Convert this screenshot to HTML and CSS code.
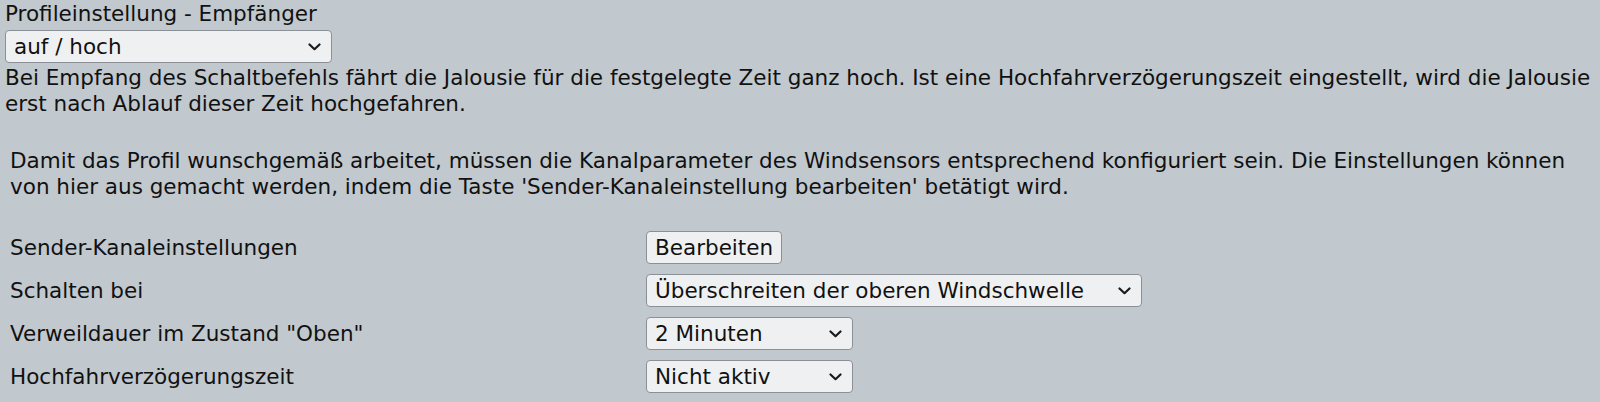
FILE: index.html
```html
<!DOCTYPE html>
<html lang="de">
<head>
    <meta charset="UTF-8">
    <title>Profileinstellung - Empfänger</title>
    <link rel="stylesheet" href="styles.css">
</head>
<body>
<div class="profile">
    <div class="profile-title">Profileinstellung - Empfänger</div>
    <span class="sel-wrap sel-wrap-block">
        <select id="profileSel" class="sel sel-profile">
            <option selected>auf / hoch</option>
            <option>ab / runter</option>
            <option>Stopp</option>
        </select>
        <svg class="chev" viewBox="0 0 13 8"><path d="M1.5 1.5 L6.5 6.2 L11.5 1.5"/></svg>
    </span>
    <p class="desc">Bei Empfang des Schaltbefehls fährt die Jalousie für die festgelegte Zeit ganz hoch. Ist eine Hochfahrverzögerungszeit eingestellt, wird die Jalousie erst nach Ablauf dieser Zeit hochgefahren.</p>
</div>
<div class="params">
    <p class="note">Damit das Profil wunschgemäß arbeitet, müssen die Kanalparameter des Windsensors entsprechend konfiguriert sein. Die Einstellungen können von hier aus gemacht werden, indem die Taste 'Sender-Kanaleinstellung bearbeiten' betätigt wird.</p>
    <div class="row row-first">
        <span class="label">Sender-Kanaleinstellungen</span>
        <span class="ctrl"><button type="button" class="btn">Bearbeiten</button></span>
    </div>
    <div class="row">
        <span class="label">Schalten bei</span>
        <span class="ctrl sel-wrap">
            <select class="sel sel-wide">
                <option selected>Überschreiten der oberen Windschwelle</option>
                <option>Unterschreiten der unteren Windschwelle</option>
            </select>
            <svg class="chev" viewBox="0 0 13 8"><path d="M1.5 1.5 L6.5 6.2 L11.5 1.5"/></svg>
        </span>
    </div>
    <div class="row">
        <span class="label">Verweildauer im Zustand "Oben"</span>
        <span class="ctrl sel-wrap">
            <select class="sel sel-small">
                <option>1 Minute</option>
                <option selected>2 Minuten</option>
                <option>5 Minuten</option>
            </select>
            <svg class="chev" viewBox="0 0 13 8"><path d="M1.5 1.5 L6.5 6.2 L11.5 1.5"/></svg>
        </span>
    </div>
    <div class="row">
        <span class="label">Hochfahrverzögerungszeit</span>
        <span class="ctrl sel-wrap">
            <select class="sel sel-small">
                <option selected>Nicht aktiv</option>
                <option>10 Sekunden</option>
            </select>
            <svg class="chev" viewBox="0 0 13 8"><path d="M1.5 1.5 L6.5 6.2 L11.5 1.5"/></svg>
        </span>
    </div>
</div>
</body>
</html>
```

FILE: styles.css
```css
body {
    margin: 0;
    padding: 0 5px;
    background: #c1c8ce;
    color: #111;
    font-family: "DejaVu Sans", Verdana, sans-serif;
    font-size: 21.5px;
    line-height: 26px;
}

.profile-title {
    margin-top: 1px;
}

.sel,
.btn {
    font-family: "DejaVu Sans", Verdana, sans-serif;
    font-size: 21.5px;
    color: #111;
    background-color: #eff0f2;
    border: 1px solid #8b9096;
    border-radius: 4px;
    height: 33px;
    box-sizing: border-box;
}

.sel {
    -webkit-appearance: none;
    appearance: none;
    padding: 0 30px 0 8px;
    margin: 0;
    display: block;
}

.sel-wrap {
    position: relative;
    display: inline-block;
}

.sel-wrap-block {
    display: block;
    width: 327px;
    margin-top: 3px;
}

.chev {
    position: absolute;
    right: 11px;
    top: 50%;
    width: 13px;
    height: 8px;
    margin-top: -4px;
    fill: none;
    stroke: #1a1a1a;
    stroke-width: 2.2;
    stroke-linecap: round;
    stroke-linejoin: round;
    pointer-events: none;
}

.sel-profile {
    width: 327px;
}

.desc {
    margin: 2px 0 0 0;
}

.params {
    padding-left: 5px;
    margin-top: 31px;
}

.note {
    margin: 0;
}

.row {
    display: grid;
    grid-template-columns: 636px auto;
    align-items: center;
    height: 43px;
}

.row-first {
    margin-top: 26px;
}

.ctrl {
    justify-self: start;
}

.btn {
    padding: 0 8px;
    margin: 0;
}

.sel-wide {
    width: 496px;
}

.sel-small {
    width: 207px;
}
```
